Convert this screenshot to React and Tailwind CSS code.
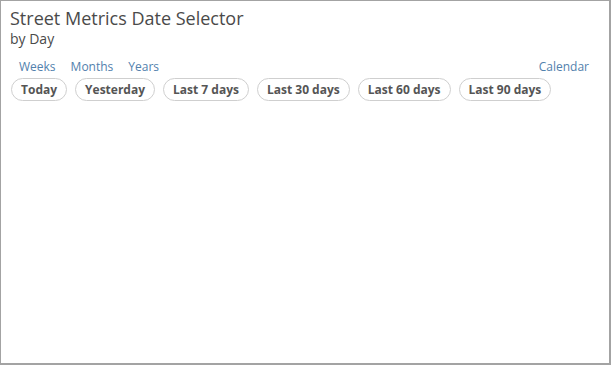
export default function App() {
  const buttons = ["Today", "Yesterday", "Last 7 days", "Last 30 days", "Last 60 days", "Last 90 days"];
  return (
    <div className="w-[611px] h-[365px] bg-white border-l border-t border-r-2 border-b-2 border-[#a3a3a3] overflow-hidden" style={{ fontFamily: '"Open Sans", sans-serif' }}>
      <div className="pl-[9px] pt-[5px]">
        <div className="text-[18px] leading-[24px] text-[#4a4a4a]">Street Metrics Date Selector</div>
        <div className="text-[14px] leading-[18px] text-[#4a4a4a]">by Day</div>
      </div>
      <div className="flex justify-between pl-[18px] pr-[20px] mt-[11px] text-[12px] leading-[16px] text-[#5281ad]">
        <div className="flex gap-[15px]">
          <span>Weeks</span>
          <span>Months</span>
          <span>Years</span>
        </div>
        <span>Calendar</span>
      </div>
      <div className="flex gap-[8px] pl-[10px] mt-[3px]">
        {buttons.map((b) => (
          <div key={b} className="h-[23px] px-[9px] flex items-center rounded-full border border-[#cfcfcf] text-[12px] font-bold text-[#555]">
            {b}
          </div>
        ))}
      </div>
    </div>
  );
}
